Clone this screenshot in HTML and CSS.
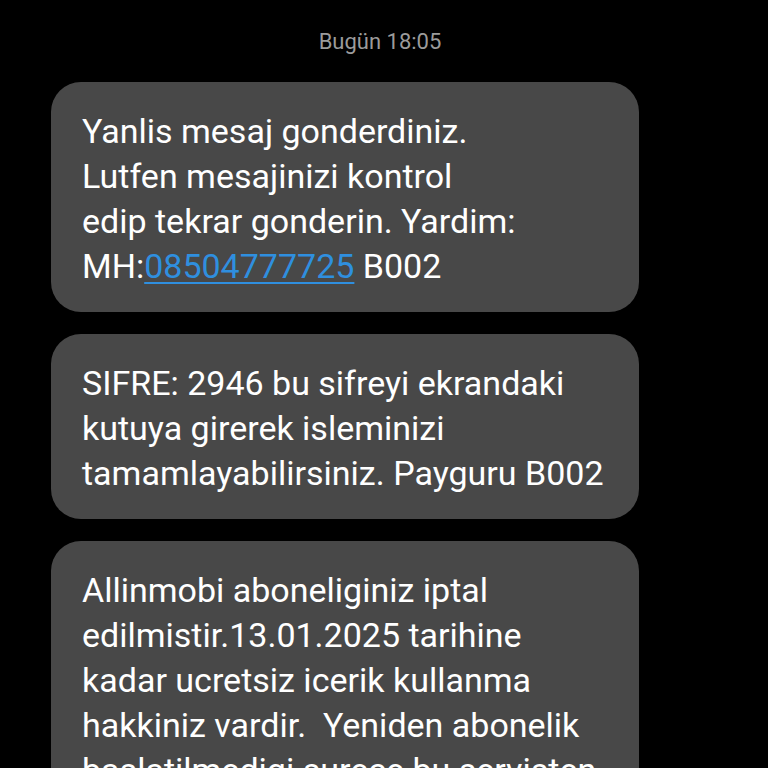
FILE: index.html
```html
<!DOCTYPE html>
<html lang="tr">
<head>
<meta charset="utf-8">
<link rel="stylesheet" href="styles.css">
</head>
<body>
<main class="thread">
  <div class="stamp">Bugün 18:05</div>
  <div class="bubble">Yanlis mesaj gonderdiniz.<br>Lutfen mesajinizi kontrol<br>edip tekrar gonderin. Yardim:<br>MH:<a class="link" href="#">08504777725</a> B002</div>
  <div class="bubble">SIFRE: 2946 bu sifreyi ekrandaki<br>kutuya girerek isleminizi<br>tamamlayabilirsiniz. Payguru B002</div>
  <div class="bubble">Allinmobi aboneliginiz iptal<br>edilmistir.13.01.2025 tarihine<br>kadar ucretsiz icerik kullanma<br>hakkiniz vardir.&nbsp; Yeniden abonelik<br>baslatilmedigi surece bu servisten<br>ucret alinmayacaktir.</div>
</main>
</body>
</html>
```
FILE: styles.css
```css
html, body {
  margin: 0;
  padding: 0;
  background: #000;
  height: 768px;
  overflow: hidden;
}
.thread {
  display: flex;
  flex-direction: column;
  align-items: flex-start;
  padding: 0 0 0 51px;
  font-family: Roboto, "Noto Sans", sans-serif;
}
.stamp {
  align-self: stretch;
  text-align: center;
  padding: 30px 59px 0 0;
  height: 82px;
  box-sizing: border-box;
  color: #9b9b9b;
  font-size: 22px;
  line-height: 24px;
}
.bubble {
  box-sizing: border-box;
  width: 588px;
  background: #484848;
  color: #fff;
  border-radius: 30px;
  padding: 27px 20px 23px 31px;
  font-size: 34px;
  line-height: 45px;
  margin-bottom: 22px;
  white-space: nowrap;
}
.link {
  color: #2f8fdf;
  text-decoration: underline;
  text-decoration-thickness: 2px;
  text-underline-offset: 4px;
}
```
